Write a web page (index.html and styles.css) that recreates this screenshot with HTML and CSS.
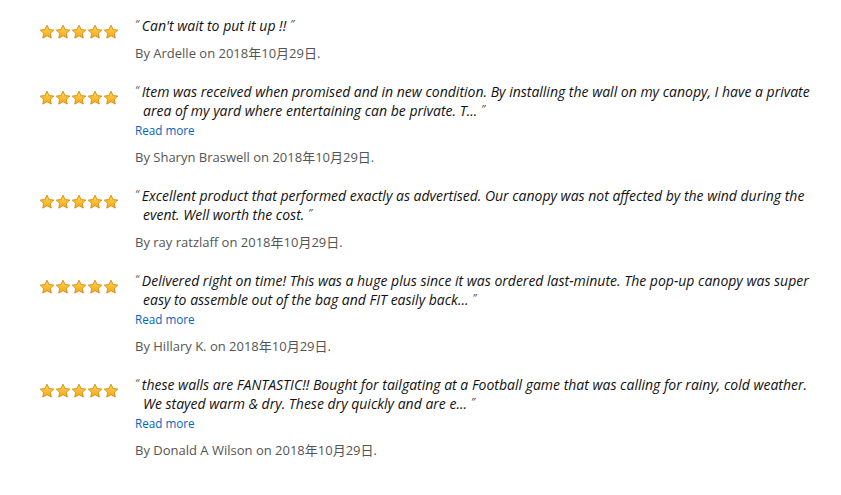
FILE: index.html
```html
<!DOCTYPE html>
<html lang="en">
<head>
<meta charset="utf-8">
<title>Reviews</title>
<link rel="stylesheet" href="styles.css">
</head>
<body>
<svg width="0" height="0" class="defs" aria-hidden="true">
  <defs>
    <linearGradient id="sg" x1="0" y1="0" x2="0" y2="1">
      <stop offset="0" stop-color="#FFD84A"/>
      <stop offset="1" stop-color="#F7A51C"/>
    </linearGradient>
    <symbol id="star" viewBox="0 0 16 16">
      <path d="M8 1.2 L10.05 5.55 L14.8 6.1 L11.3 9.35 L12.25 14.1 L8 11.7 L3.75 14.1 L4.7 9.35 L1.2 6.1 L5.95 5.55 Z" fill="url(#sg)" stroke="#D9880F" stroke-width="0.9" stroke-linejoin="round"/>
    </symbol>
  </defs>
</svg>
<div class="reviews">
  <div class="review">
    <div class="stars"><svg><use href="#star"/></svg><svg><use href="#star"/></svg><svg><use href="#star"/></svg><svg><use href="#star"/></svg><svg><use href="#star"/></svg></div>
    <div class="body">
      <p class="text"><span class="q">“</span>Can't wait to put it up !!<span class="q qe">”</span></p>
      <div class="meta">By Ardelle on 2018年10月29日.</div>
    </div>
  </div>
  <div class="review">
    <div class="stars"><svg><use href="#star"/></svg><svg><use href="#star"/></svg><svg><use href="#star"/></svg><svg><use href="#star"/></svg><svg><use href="#star"/></svg></div>
    <div class="body">
      <p class="text"><span class="q">“</span>Item was received when promised and in new condition. By installing the wall on my canopy, I have a private<br>area of my yard where entertaining can be private. T...<span class="q qe">”</span></p>
      <a class="more" href="#">Read more</a>
      <div class="meta">By Sharyn Braswell on 2018年10月29日.</div>
    </div>
  </div>
  <div class="review">
    <div class="stars"><svg><use href="#star"/></svg><svg><use href="#star"/></svg><svg><use href="#star"/></svg><svg><use href="#star"/></svg><svg><use href="#star"/></svg></div>
    <div class="body">
      <p class="text"><span class="q">“</span>Excellent product that performed exactly as advertised. Our canopy was not affected by the wind during the<br>event. Well worth the cost.<span class="q qe">”</span></p>
      <div class="meta">By ray ratzlaff on 2018年10月29日.</div>
    </div>
  </div>
  <div class="review">
    <div class="stars"><svg><use href="#star"/></svg><svg><use href="#star"/></svg><svg><use href="#star"/></svg><svg><use href="#star"/></svg><svg><use href="#star"/></svg></div>
    <div class="body">
      <p class="text"><span class="q">“</span>Delivered right on time! This was a huge plus since it was ordered last-minute. The pop-up canopy was super<br>easy to assemble out of the bag and FIT easily back...<span class="q qe">”</span></p>
      <a class="more" href="#">Read more</a>
      <div class="meta">By Hillary K. on 2018年10月29日.</div>
    </div>
  </div>
  <div class="review">
    <div class="stars"><svg><use href="#star"/></svg><svg><use href="#star"/></svg><svg><use href="#star"/></svg><svg><use href="#star"/></svg><svg><use href="#star"/></svg></div>
    <div class="body">
      <p class="text"><span class="q">“</span>these walls are FANTASTIC!! Bought for tailgating at a Football game that was calling for rainy, cold weather.<br>We stayed warm &amp; dry. These dry quickly and are e...<span class="q qe">”</span></p>
      <a class="more" href="#">Read more</a>
      <div class="meta">By Donald A Wilson on 2018年10月29日.</div>
    </div>
  </div>
</div>
</body>
</html>
```
FILE: styles.css
```css
html, body {
  margin: 0;
  padding: 0;
  background: #ffffff;
}
.defs {
  position: absolute;
  width: 0;
  height: 0;
  overflow: hidden;
}
.reviews {
  display: flex;
  flex-direction: column;
  gap: 19px;
  padding: 16px 0 0 39px;
  font-family: "Open Sans", "Noto Sans CJK SC", sans-serif;
}
.review {
  display: flex;
  align-items: flex-start;
}
.stars {
  display: flex;
  width: 96px;
  flex: none;
  padding-top: 8px;
}
.stars svg {
  width: 16px;
  height: 16px;
  display: block;
}
.body {
  display: flex;
  flex-direction: column;
  align-items: flex-start;
}
.text {
  margin: 0;
  padding-left: 8px;
  text-indent: -8px;
  font-style: italic;
  font-size: 14px;
  line-height: 19px;
  color: #111111;
  white-space: nowrap;
}
.q {
  font-size: 11px;
  line-height: 0;
  color: #555555;
  position: relative;
  top: -3px;
  margin-right: 3px;
}
.qe {
  margin-left: 4px;
}
.more {
  margin-top: 2px;
  font-size: 11.7px;
  line-height: 17px;
  color: #0066c0;
  text-decoration: none;
}
.meta {
  margin-top: 9px;
  font-size: 13px;
  line-height: 19px;
  color: #555555;
}
```
